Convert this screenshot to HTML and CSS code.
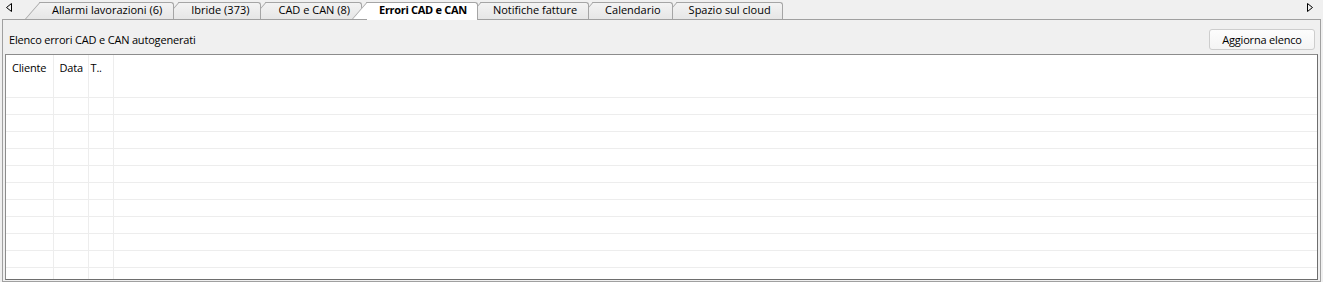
FILE: index.html
```html
<!DOCTYPE html>
<html>
<head>
<title>Errori CAD e CAN</title>
<link rel="stylesheet" href="styles.css">
</head>
<body>
<div class="tabbar">
  <span class="arrow arrow-left">
    <svg width="6" height="10" viewBox="0 0 6 10"><polygon points="5.5,0.5 0.5,4.5 5.5,8.5" fill="none" stroke="#000" stroke-width="1"/></svg>
  </span>
  <div class="tabs">
    <div class="tab" style="z-index:7">Allarmi lavorazioni (6)</div>
    <div class="tab" style="z-index:6">Ibride (373)</div>
    <div class="tab" style="z-index:5">CAD e CAN (8)</div>
    <div class="tab active" style="z-index:9">Errori CAD e CAN</div>
    <div class="tab" style="z-index:4">Notifiche fatture</div>
    <div class="tab" style="z-index:3">Calendario</div>
    <div class="tab" style="z-index:2">Spazio sul cloud</div>
  </div>
  <span class="arrow arrow-right">
    <svg width="6" height="10" viewBox="0 0 6 10"><polygon points="0.5,0.5 5.5,4.5 0.5,8.5" fill="none" stroke="#000" stroke-width="1"/></svg>
  </span>
</div>

<div class="panel">
  <div class="toolbar">
    <span class="caption">Elenco errori CAD e CAN autogenerati</span>
    <button class="btn">Aggiorna elenco</button>
  </div>
  <div class="grid">
    <table>
      <colgroup>
        <col class="c-cliente"><col class="c-data"><col class="c-t"><col>
      </colgroup>
      <thead>
        <tr><th>Cliente</th><th>Data</th><th class="narrow">T..</th><th class="fill"></th></tr>
      </thead>
      <tbody>
        <tr><td></td><td></td><td></td><td class="fill"></td></tr>
        <tr><td></td><td></td><td></td><td class="fill"></td></tr>
        <tr><td></td><td></td><td></td><td class="fill"></td></tr>
        <tr><td></td><td></td><td></td><td class="fill"></td></tr>
        <tr><td></td><td></td><td></td><td class="fill"></td></tr>
        <tr><td></td><td></td><td></td><td class="fill"></td></tr>
        <tr><td></td><td></td><td></td><td class="fill"></td></tr>
        <tr><td></td><td></td><td></td><td class="fill"></td></tr>
        <tr><td></td><td></td><td></td><td class="fill"></td></tr>
        <tr><td></td><td></td><td></td><td class="fill"></td></tr>
        <tr><td></td><td></td><td></td><td class="fill"></td></tr>
        <tr><td></td><td></td><td></td><td class="fill"></td></tr>
      </tbody>
    </table>
  </div>
</div>
</body>
</html>
```

FILE: styles.css
```css
body {
  margin: 0;
  padding: 0;
  font-family: "Open Sans", sans-serif;
  font-size: 11px;
  letter-spacing: -0.18px;
  color: #000;
  background-color: #f0f0f0;
}

/* tab strip */
.tabbar {
  display: flex;
  align-items: flex-end;
  height: 19px;
}

.arrow {
  align-self: flex-start;
  padding-top: 3px;
  line-height: 0;
}

.arrow-left {
  width: 25px;
  padding-left: 6px;
  box-sizing: border-box;
}

.arrow-right {
  width: 19px;
  padding-left: 3px;
  box-sizing: border-box;
}

.tabs {
  display: flex;
  align-items: flex-end;
  flex: 1;
}

.tab {
  position: relative;
  height: 17px;
  line-height: 16px;
  padding: 0 12px 0 27px;
  margin-left: -10px;
  letter-spacing: 0;
  white-space: nowrap;
  box-sizing: border-box;
}

.tab:first-child {
  margin-left: 0;
}

.tab::before {
  content: "";
  position: absolute;
  left: 0;
  top: 0;
  bottom: 0;
  width: 20px;
  background: linear-gradient(#f3f3f3, #e6e6e6);
  border-left: 1px solid #a5a5a5;
  border-top: 1px solid #a5a5a5;
  transform: skewX(-41deg);
  transform-origin: bottom left;
  z-index: -1;
}

.tab::after {
  content: "";
  position: absolute;
  left: 15px;
  right: 0;
  top: 0;
  bottom: 0;
  background: linear-gradient(#f3f3f3, #e6e6e6);
  border-top: 1px solid #a5a5a5;
  border-right: 1px solid #a5a5a5;
  border-top-right-radius: 3px;
  z-index: -1;
}

.tab.active {
  height: 18px;
  margin-bottom: -1px;
  padding-right: 11px;
  font-weight: bold;
  letter-spacing: -0.3px;
}

.tab.active + .tab {
  margin-left: -12px;
}

.tab.active + .tab + .tab,
.tab.active + .tab + .tab + .tab {
  margin-left: -11px;
}

.tab.active::before,
.tab.active::after {
  background: #fff;
}

.tab.active::before {
  bottom: 1px;
}

/* page */
.panel {
  height: 263px;
  margin: 0 2px;
  padding: 0 2px;
  border: 1px solid #a0a0a0;
  box-sizing: border-box;
}

.toolbar {
  display: flex;
  justify-content: space-between;
  align-items: center;
  padding: 9px 3px 4px 4px;
}

.caption {
  line-height: 21px;
}

.btn {
  width: 106px;
  height: 21px;
  padding: 0;
  font-family: inherit;
  font-size: 11px;
  letter-spacing: inherit;
  color: #000;
  background: linear-gradient(#fdfdfd, #f4f4f4);
  border: 1px solid #cdcdcd;
  border-radius: 3px;
}

.grid {
  height: 226px;
  overflow: hidden;
  background-color: #fff;
  border: 1px solid #8c8c8c;
  border-right-color: #6e6e6e;
  border-bottom-color: #6e6e6e;
  box-sizing: border-box;
}

table {
  width: 100%;
  table-layout: fixed;
  border-collapse: collapse;
}

.c-cliente { width: 47px; }
.c-data { width: 35px; }
.c-t { width: 25px; }

th {
  height: 25px;
  padding: 0 0 0 6px;
  font-weight: normal;
  text-align: left;
  white-space: nowrap;
  overflow: hidden;
  border-right: 1px solid #ededed;
  box-sizing: border-box;
}

th.narrow {
  padding-left: 2px;
}

td {
  height: 17px;
  padding: 0;
  border-right: 1px solid #ededed;
  border-bottom: 1px solid #ededed;
  box-sizing: border-box;
}

th.fill,
td.fill {
  border-right: none;
}
```
